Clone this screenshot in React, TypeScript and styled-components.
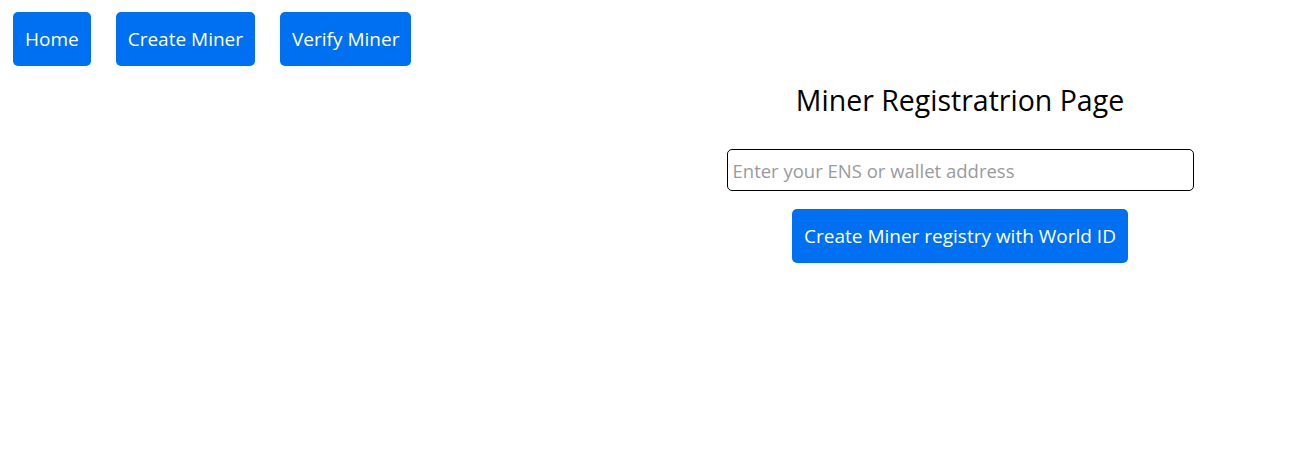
import React, { useState } from 'react'
import styled, { createGlobalStyle } from 'styled-components'

const GlobalStyle = createGlobalStyle`
  body {
    margin: 8px;
    background: #ffffff;
    font-family: 'Open Sans', 'Noto Sans', sans-serif;
  }
`

const Nav = styled.nav`
  display: flex;
  gap: 25px;
  padding: 4px 5px 0;
`

const BlueButton = styled.button`
  font-family: inherit;
  font-size: 19px;
  color: #ffffff;
  background-color: #0070f3;
  border: 0;
  border-radius: 5px;
  height: 54px;
  padding: 0 12px;
  cursor: pointer;
`

const Main = styled.main`
  display: flex;
  flex-direction: column;
  align-items: center;
  padding-left: 604px;
  margin-top: 16px;
`

const Title = styled.h1`
  font-family: inherit;
  font-weight: 400;
  font-size: 28.5px;
  line-height: 36px;
  margin: 0 0 31px;
  color: #000;
`

const AddressInput = styled.input`
  box-sizing: border-box;
  width: 467px;
  height: 42px;
  padding: 0 5px;
  font-family: inherit;
  font-size: 18.5px;
  border: 1px solid #000;
  border-radius: 5px;
  outline: none;
  &::placeholder {
    color: #9a9aa1;
  }
`

const SubmitButton = styled(BlueButton)`
  margin-top: 18px;
`

const App = () => {
  const [address, setAddress] = useState<string>('')

  return (
    <>
      <GlobalStyle />
      <Nav>
        <BlueButton>Home</BlueButton>
        <BlueButton>Create Miner</BlueButton>
        <BlueButton>Verify Miner</BlueButton>
      </Nav>
      <Main>
        <Title>Miner Registratrion Page</Title>
        <AddressInput
          value={address}
          onChange={(e) => setAddress(e.target.value)}
          placeholder="Enter your ENS or wallet address"
        />
        <SubmitButton>Create Miner registry with World ID</SubmitButton>
      </Main>
    </>
  )
}

export default App
